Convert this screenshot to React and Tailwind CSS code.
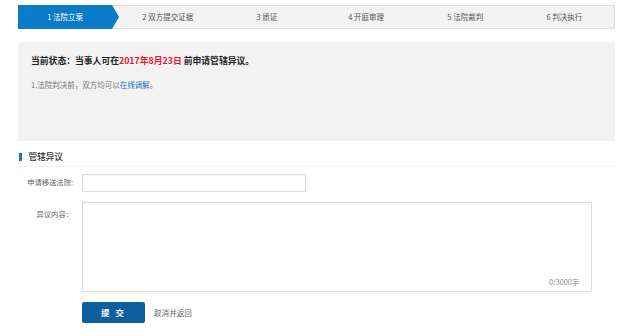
import React from "react";

const steps = ["1 法院立案", "2 双方提交证据", "3 质证", "4 开庭审理", "5 法院裁判", "6 判决执行"];

export default function App() {
  return (
    <div
      className="w-[640px] h-[336px] bg-white overflow-hidden"
      style={{ fontFamily: '"Noto Sans CJK SC", "Liberation Sans", sans-serif' }}
    >
      <div className="ml-[18px] w-[597px] pt-[5px]">
        {/* Steps */}
        <div className="grid grid-cols-6 h-[24px] bg-[#f2f2f2] border border-[#dedede]">
          {steps.map((s, i) =>
            i === 0 ? (
              <div key={s} className="relative flex items-center justify-center bg-[#0a7bc6] text-white text-[7.5px] leading-none -m-px mr-[6px] z-10">
                <span>{s}</span>
                <svg className="absolute right-[-7px] top-0 h-[24px] w-[7px]" viewBox="0 0 7 24" preserveAspectRatio="none">
                  <polygon points="0,0 7,12 0,24" fill="#0a7bc6" />
                </svg>
              </div>
            ) : (
              <div key={s} className="flex items-center justify-center text-[#555] text-[7.5px] leading-none">
                {s}
              </div>
            )
          )}
        </div>

        {/* Status box */}
        <div className="mt-[13px] h-[99px] bg-[#f2f2f2] px-[13px] pt-[13px]">
          <div className="text-[8.8px] font-bold text-[#222] leading-[12px]">
            当前状态：当事人可在<span className="text-[#f0141e]">2017年8月23日</span> 前申请管辖异议。
          </div>
          <div className="mt-[13px] text-[7.5px] text-[#777] leading-[10px]">
            1.法院判决前，双方均可以<span className="text-[#1a73c0]">在线调解</span>。
          </div>
        </div>

        {/* Heading */}
        <div className="flex items-center h-[26px] pt-[6px] border-b border-[#f0f0f0]">
          <div className="w-[2.5px] h-[8px] bg-[#0a7bc6] ml-px" />
          <div className="ml-[7px] text-[8.6px] text-[#333] font-medium leading-none">管辖异议</div>
        </div>

        {/* Form */}
        <div className="mt-[7px] flex items-center h-[18px]">
          <div className="w-[55px] text-right text-[7.3px] text-[#666] leading-none">申请移送法院:</div>
          <div className="ml-[9px] w-[224px] h-[18px] border border-[#dcdcdc] bg-white" />
        </div>

        <div className="mt-[10px] flex items-start">
          <div className="w-[55px] text-right text-[7.3px] text-[#666] leading-none pt-[9px]">异议内容：</div>
          <div className="ml-[9px] w-[510px] h-[90px] border border-[#dcdcdc] bg-white flex items-end justify-end pr-[12px] pb-[5px]">
            <span className="text-[7.2px] text-[#888] leading-none">0/3000字</span>
          </div>
        </div>

        <div className="mt-[10px] flex items-center">
          <div className="ml-[64px] w-[63px] h-[21px] bg-[#0d5e9e] rounded-[2px] flex items-center justify-center text-white text-[8.5px] font-bold tracking-[2px] leading-none">
            提 交
          </div>
          <div className="ml-[9px] text-[7.6px] text-[#666] leading-none">取消并返回</div>
        </div>
      </div>
    </div>
  );
}
